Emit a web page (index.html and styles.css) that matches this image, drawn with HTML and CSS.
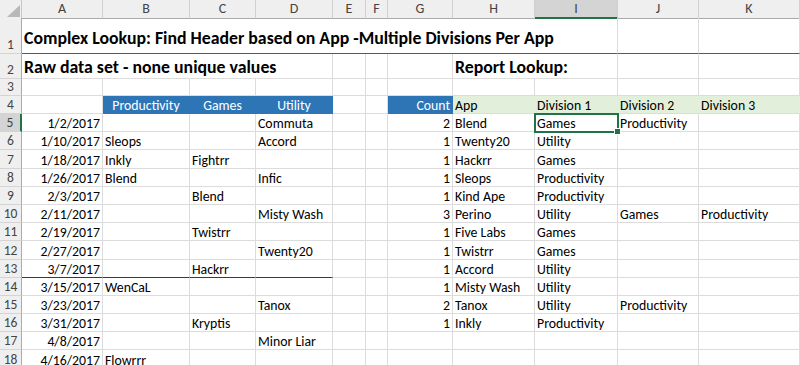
FILE: index.html
```html
<!DOCTYPE html>
<html>
<head>
<meta charset="utf-8">
<link rel="stylesheet" href="styles.css">
</head>
<body>
<div class="sheet">
  <div class="row hdr">
    <div class="corner"><svg width="22" height="18" viewBox="0 0 22 18"><polygon points="7,17 20,17 20,5" fill="#b8b8b8"/></svg></div>
    <div class="ch">A</div><div class="ch">B</div><div class="ch">C</div><div class="ch">D</div><div class="ch">E</div><div class="ch">F</div><div class="ch">G</div><div class="ch">H</div><div class="ch ch-sel">I</div><div class="ch">J</div><div class="ch">K</div>
  </div>
  <div class="row r1">
    <div class="rh">1</div>
    <div class="c title span-9">Complex Lookup: Find Header based on App -Multiple Divisions Per App</div>
    <div class="c"></div><div class="c"></div>
  </div>
  <div class="row r2">
    <div class="rh">2</div>
    <div class="c sub span-4">Raw data set - none unique values</div>
    <div class="c"></div><div class="c"></div><div class="c"></div>
    <div class="c sub span-2">Report Lookup:</div>
    <div class="c"></div><div class="c"></div>
  </div>
  <div class="row r3">
    <div class="rh">3</div>
    <div class="c"></div><div class="c"></div><div class="c"></div><div class="c"></div><div class="c"></div><div class="c"></div><div class="c"></div><div class="c"></div><div class="c"></div><div class="c"></div><div class="c"></div>
  </div>
  <div class="row r4">
    <div class="rh">4</div>
    <div class="c"></div>
    <div class="c blue">Productivity</div><div class="c blue">Games</div><div class="c blue">Utility</div>
    <div class="c"></div><div class="c"></div>
    <div class="c blue num">Count</div>
    <div class="c green">App</div><div class="c green">Division 1</div><div class="c green">Division 2</div><div class="c green">Division 3</div>
  </div>
  <div class="row rd">
    <div class="rh rh-sel">5</div>
    <div class="c num">1/2/2017</div><div class="c"></div><div class="c"></div><div class="c">Commuta</div><div class="c"></div><div class="c"></div>
    <div class="c num">2</div><div class="c">Blend</div><div class="c active">Games<span class="handle"></span></div><div class="c">Productivity</div><div class="c"></div>
  </div>
  <div class="row rd">
    <div class="rh">6</div>
    <div class="c num">1/10/2017</div><div class="c">Sleops</div><div class="c"></div><div class="c">Accord</div><div class="c"></div><div class="c"></div>
    <div class="c num">1</div><div class="c">Twenty20</div><div class="c">Utility</div><div class="c"></div><div class="c"></div>
  </div>
  <div class="row rd">
    <div class="rh">7</div>
    <div class="c num">1/18/2017</div><div class="c">Inkly</div><div class="c">Fightrr</div><div class="c"></div><div class="c"></div><div class="c"></div>
    <div class="c num">1</div><div class="c">Hackrr</div><div class="c">Games</div><div class="c"></div><div class="c"></div>
  </div>
  <div class="row rd">
    <div class="rh">8</div>
    <div class="c num">1/26/2017</div><div class="c">Blend</div><div class="c"></div><div class="c">Infic</div><div class="c"></div><div class="c"></div>
    <div class="c num">1</div><div class="c">Sleops</div><div class="c">Productivity</div><div class="c"></div><div class="c"></div>
  </div>
  <div class="row rd">
    <div class="rh">9</div>
    <div class="c num">2/3/2017</div><div class="c"></div><div class="c">Blend</div><div class="c"></div><div class="c"></div><div class="c"></div>
    <div class="c num">1</div><div class="c">Kind Ape</div><div class="c">Productivity</div><div class="c"></div><div class="c"></div>
  </div>
  <div class="row rd">
    <div class="rh">10</div>
    <div class="c num">2/11/2017</div><div class="c"></div><div class="c"></div><div class="c">Misty Wash</div><div class="c"></div><div class="c"></div>
    <div class="c num">3</div><div class="c">Perino</div><div class="c">Utility</div><div class="c">Games</div><div class="c">Productivity</div>
  </div>
  <div class="row rd">
    <div class="rh">11</div>
    <div class="c num">2/19/2017</div><div class="c"></div><div class="c">Twistrr</div><div class="c"></div><div class="c"></div><div class="c"></div>
    <div class="c num">1</div><div class="c">Five Labs</div><div class="c">Games</div><div class="c"></div><div class="c"></div>
  </div>
  <div class="row rd">
    <div class="rh">12</div>
    <div class="c num">2/27/2017</div><div class="c"></div><div class="c"></div><div class="c">Twenty20</div><div class="c"></div><div class="c"></div>
    <div class="c num">1</div><div class="c">Twistrr</div><div class="c">Games</div><div class="c"></div><div class="c"></div>
  </div>
  <div class="row rd">
    <div class="rh">13</div>
    <div class="c num end">3/7/2017</div><div class="c end"></div><div class="c end">Hackrr</div><div class="c end"></div><div class="c"></div><div class="c"></div>
    <div class="c num">1</div><div class="c">Accord</div><div class="c">Utility</div><div class="c"></div><div class="c"></div>
  </div>
  <div class="row rd">
    <div class="rh">14</div>
    <div class="c num">3/15/2017</div><div class="c">WenCaL</div><div class="c"></div><div class="c"></div><div class="c"></div><div class="c"></div>
    <div class="c num">1</div><div class="c">Misty Wash</div><div class="c">Utility</div><div class="c"></div><div class="c"></div>
  </div>
  <div class="row rd">
    <div class="rh">15</div>
    <div class="c num">3/23/2017</div><div class="c"></div><div class="c"></div><div class="c">Tanox</div><div class="c"></div><div class="c"></div>
    <div class="c num">2</div><div class="c">Tanox</div><div class="c">Utility</div><div class="c">Productivity</div><div class="c"></div>
  </div>
  <div class="row rd">
    <div class="rh">16</div>
    <div class="c num">3/31/2017</div><div class="c"></div><div class="c">Kryptis</div><div class="c"></div><div class="c"></div><div class="c"></div>
    <div class="c num">1</div><div class="c">Inkly</div><div class="c">Productivity</div><div class="c"></div><div class="c"></div>
  </div>
  <div class="row rd">
    <div class="rh">17</div>
    <div class="c num">4/8/2017</div><div class="c"></div><div class="c"></div><div class="c">Minor Liar</div><div class="c"></div><div class="c"></div>
    <div class="c"></div><div class="c"></div><div class="c"></div><div class="c"></div><div class="c"></div>
  </div>
  <div class="row rd">
    <div class="rh">18</div>
    <div class="c num">4/16/2017</div><div class="c">Flowrrr</div><div class="c"></div><div class="c"></div><div class="c"></div><div class="c"></div>
    <div class="c"></div><div class="c"></div><div class="c"></div><div class="c"></div><div class="c"></div>
  </div>
</div>
</body>
</html>
```

FILE: styles.css
```css
html, body {
  margin: 0;
  padding: 0;
  background: #ffffff;
  overflow: hidden;
}

.sheet {
  width: 800px;
  font-family: Carlito, Lato, "Liberation Sans", sans-serif;
  font-size: 13.8px;
  color: #000000;
}

.row {
  display: grid;
  grid-template-columns: 22px 81px 87px 66px 77px 33px 22px 65px 82px 83px 81px 101px;
}

.hdr { height: 18px; }
.r1 { height: 36px; }
.r2 { height: 25px; }
.r3 { height: 17px; }
.r4 { height: 18px; }
.rd { height: 18.2px; }

.corner {
  background: #efefef;
  border-right: 1px solid #c8c8c8;
  border-bottom: 1px solid #ababab;
  box-sizing: border-box;
}
.corner svg { display: block; }

.ch {
  background: #efefef;
  border-right: 1px solid #d0d0d0;
  border-bottom: 1px solid #ababab;
  box-sizing: border-box;
  color: #444444;
  font-size: 14px;
  line-height: 16px;
  text-align: center;
  padding-top: 1px;
}
.ch-sel {
  background: #d4d4d4;
  border-bottom: 2px solid #217346;
}

.rh {
  background: #efefef;
  border-right: 1px solid #ababab;
  border-bottom: 1px solid #d4d4d4;
  box-sizing: border-box;
  color: #444444;
  font-size: 13.5px;
  line-height: 14px;
  display: flex;
  align-items: flex-end;
  justify-content: center;
  padding-bottom: 1px;
}
.rh-sel {
  background: #d4d4d4;
  border-right: 2px solid #217346;
}

.c {
  border-right: 1px solid #dcdcdc;
  border-bottom: 1px solid #dcdcdc;
  box-sizing: border-box;
  display: flex;
  align-items: flex-end;
  padding: 0 2px 0 2px;
  line-height: 15px;
  white-space: nowrap;
  min-width: 0;
  position: relative;
}

.num { justify-content: flex-end; }

.span-9 { grid-column: span 9; }
.span-4 { grid-column: span 4; }
.span-2 { grid-column: span 2; }

.r1 .c { border-bottom: 1px solid #5a5a5a; }

.title {
  font-weight: bold;
  font-size: 17.8px;
  line-height: 20px;
  align-items: center;
  padding-top: 4px;
}

.sub {
  font-weight: bold;
  font-size: 17.8px;
  line-height: 20px;
  padding-bottom: 1px;
}

.blue {
  background: #2e75b6;
  border-color: #2e75b6;
  color: #ffffff;
  justify-content: center;
}
.blue.num { justify-content: flex-end; }

.green {
  background: #e2efda;
  border-right-color: #e2efda;
}

.end { border-bottom: 1px solid #3a3a3a; }

.active {
  outline: 2px solid #217346;
  outline-offset: -1px;
  z-index: 1;
}
.handle {
  position: absolute;
  right: -4px;
  bottom: -4px;
  width: 5px;
  height: 5px;
  background: #217346;
  border: 1px solid #ffffff;
}
```
